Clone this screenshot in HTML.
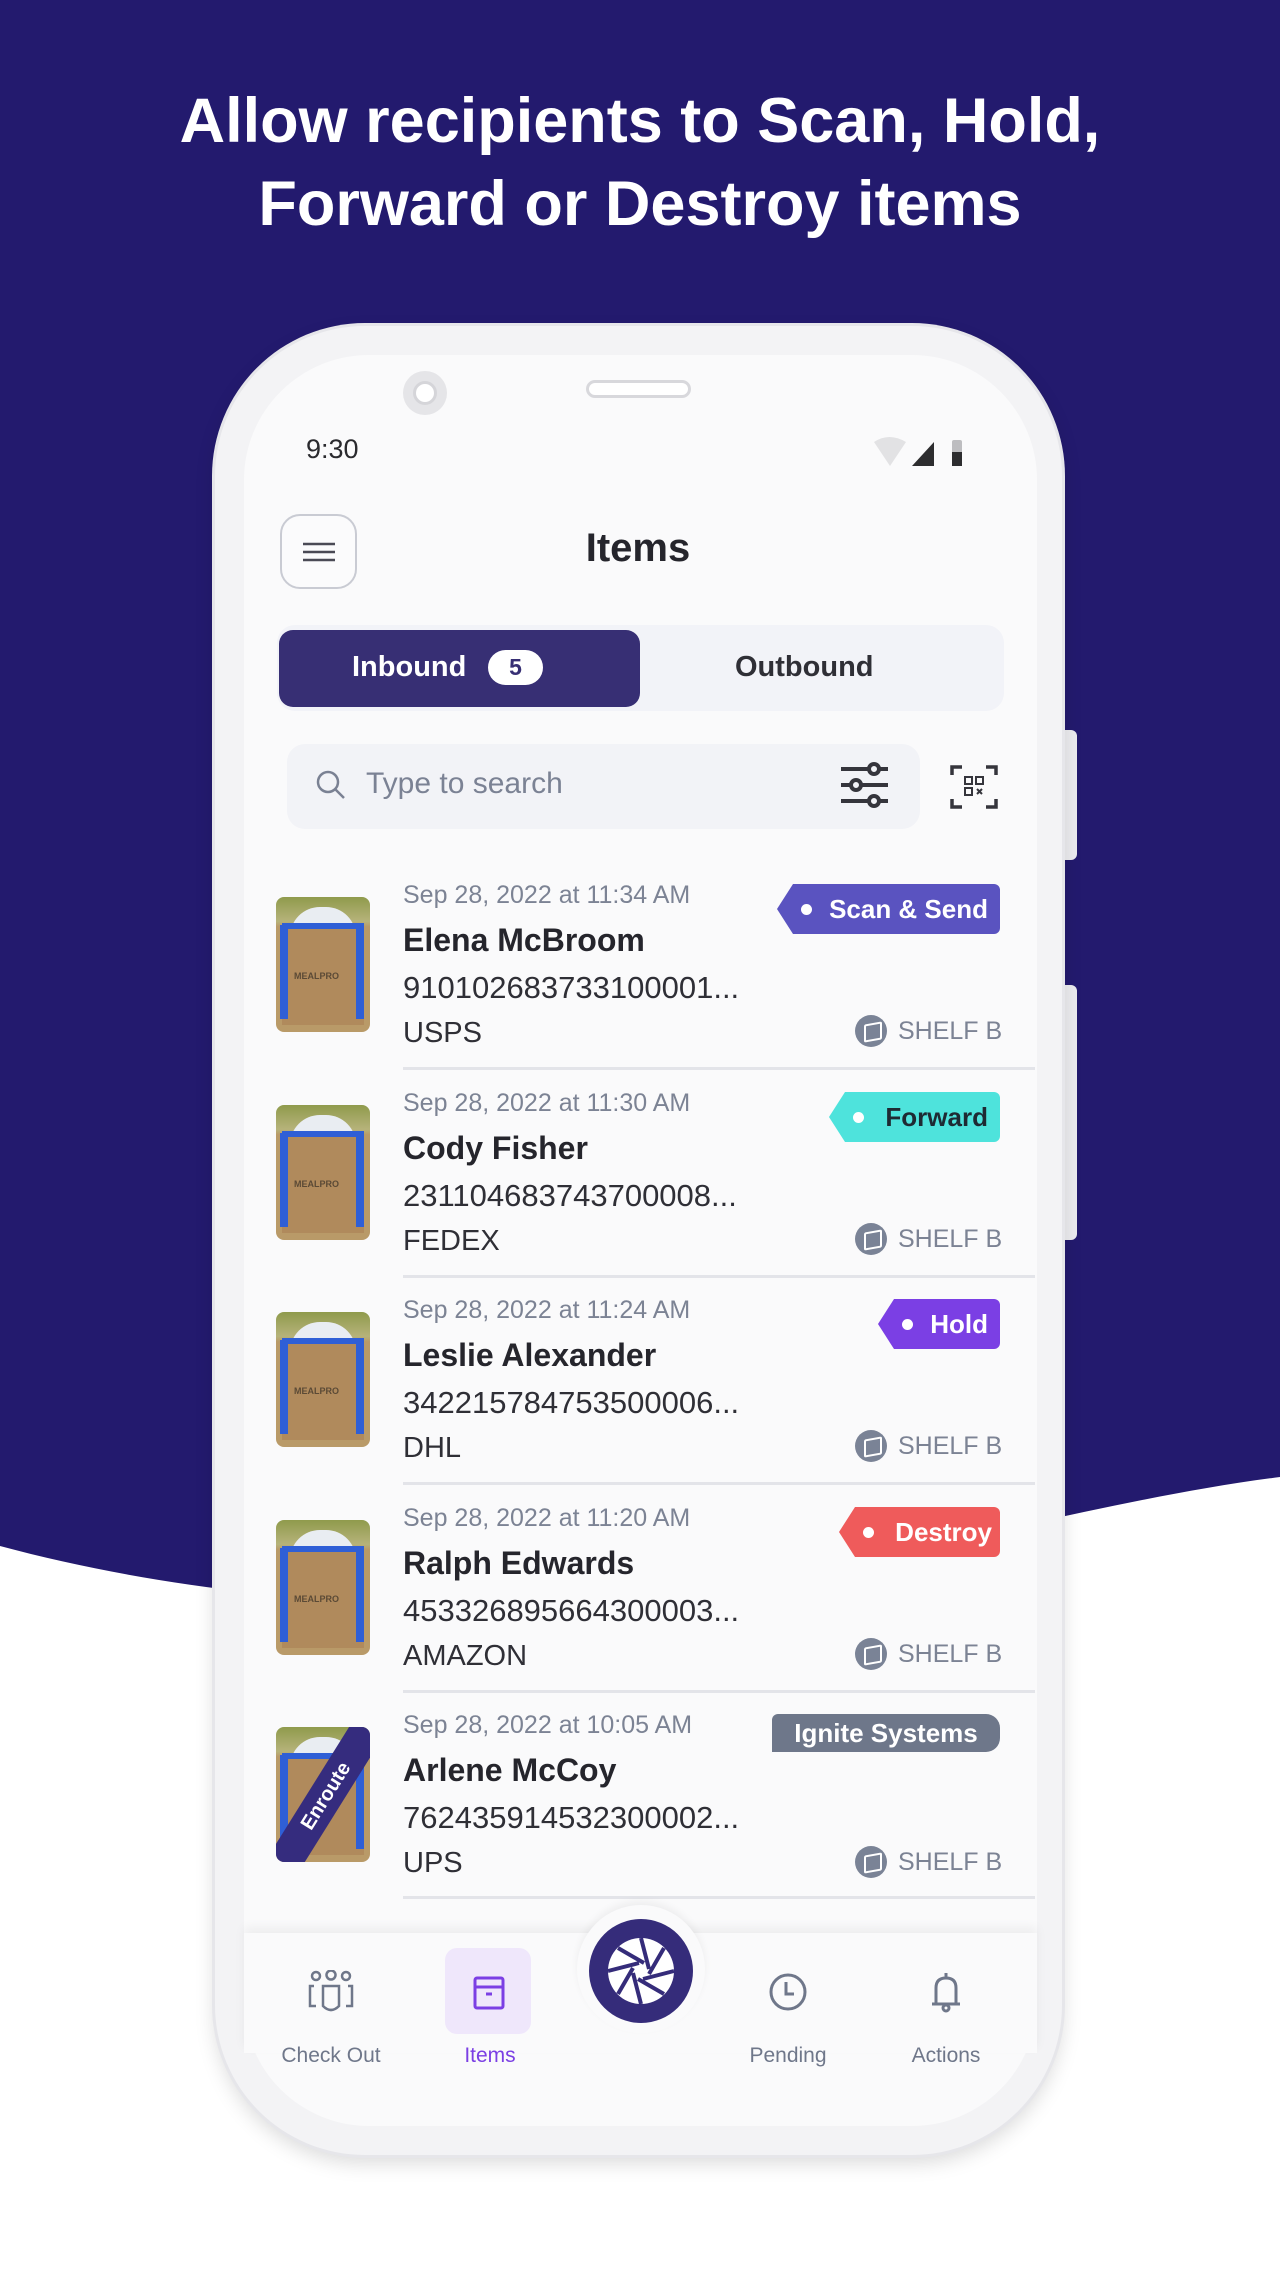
<!DOCTYPE html>
<html><head><meta charset="utf-8"><style>
*{margin:0;padding:0;box-sizing:border-box}
body{width:1280px;height:2275px;position:relative;overflow:hidden;background:#fff;font-family:"Liberation Sans",sans-serif}
.abs{position:absolute}
h1{position:absolute;left:0;width:1280px;text-align:center;color:#fff;font-size:63px;font-weight:bold;line-height:83px;top:80px}
.phone{left:215px;top:326px;width:847px;height:1829px;border-radius:150px;background:#f3f3f5;box-shadow:0 0 0 3px #e6e6ea,0 8px 20px rgba(0,0,0,.15)}
.screen{left:244px;top:355px;width:793px;height:1771px;border-radius:125px;background:#fafafb}
.item{position:absolute;left:0;width:1280px;height:208px}
.date{position:absolute;left:403px;top:20px;font-size:25px;line-height:30px;color:#7c8394}
.name{position:absolute;left:403px;top:61px;font-size:32px;line-height:38px;color:#25252c;font-weight:bold}
.num{position:absolute;left:403px;top:110px;font-size:31px;line-height:36px;color:#2f2f36}
.car{position:absolute;left:403px;top:156px;font-size:29px;line-height:34px;color:#2f2f36}
.thumb{position:absolute;left:276px;top:37px;width:94px;height:135px;border-radius:8px;overflow:hidden;background:linear-gradient(#8f9a4c 0,#b6b37a 18%,#b99a68 22%,#b99a68 100%)}
.thumb .sh{position:absolute;left:14px;top:10px;width:66px;height:30px;background:#e9edf2;border-radius:30px 30px 0 0}
.thumb .bag{position:absolute;left:6px;top:28px;width:82px;height:100px;background:#b08a5c}
.thumb .r1{position:absolute;left:4px;top:28px;width:8px;height:94px;background:#2f5fd6}
.thumb .r2{position:absolute;left:80px;top:28px;width:8px;height:94px;background:#2f5fd6}
.thumb .r3{position:absolute;left:6px;top:26px;width:82px;height:6px;background:#2f5fd6}
.thumb .t{position:absolute;left:18px;top:74px;font-size:9px;font-weight:bold;color:#5b4a36}
.tag{position:absolute;top:24px;height:50px;right:280px;color:#fff;font-size:26px;font-weight:bold;line-height:50px;padding:0 12px 0 36px;border-radius:0 6px 6px 0;white-space:nowrap}
.tag:before{content:"";position:absolute;left:-16px;top:0;border-right:16px solid var(--c);border-top:25px solid transparent;border-bottom:25px solid transparent}
.tag:after{content:"";position:absolute;left:8px;top:20px;width:11px;height:11px;border-radius:50%;background:#fff}
.shelf{position:absolute;left:855px;top:155px;width:145px;height:32px;font-size:25px;color:#7c8394;line-height:32px;white-space:nowrap}
.shelf i{position:absolute;left:0;top:0;width:32px;height:32px;border-radius:50%;background:#7a8396}
.shelf i:before{content:"";position:absolute;left:9px;top:8px;width:14px;height:14px;border:2px solid #fff;border-radius:2px;transform:skewY(-10deg)}
.shelf span{position:absolute;left:43px;top:0}
.div{position:absolute;left:403px;top:207px;width:632px;height:3px;background:#e3e4e9}
.nav{position:absolute;font-size:21px;color:#6f778a;text-align:center;width:140px;top:2044px}
</style></head><body>
<svg class="abs" style="left:0;top:0" width="1280" height="2275"><path d="M0 0H1280V1477C1100 1500 900 1560 700 1590C450 1620 200 1600 0 1546Z" fill="#231a6e"/></svg>
<h1>Allow recipients to Scan, Hold,<br>Forward or Destroy items</h1>
<div class="abs" style="left:1055px;top:730px;width:22px;height:130px;border-radius:6px;background:#ececef"></div>
<div class="abs" style="left:1055px;top:985px;width:22px;height:255px;border-radius:6px;background:#ececef"></div>
<div class="abs phone"></div>
<div class="abs screen"></div>
<div class="abs" style="left:403px;top:371px;width:44px;height:44px;border-radius:50%;background:#e5e5e8"></div>
<div class="abs" style="left:413px;top:381px;width:24px;height:24px;border-radius:50%;background:#fff;border:3px solid #d5d5d9"></div>
<div class="abs" style="left:586px;top:380px;width:105px;height:18px;border-radius:9px;border:3px solid #d8d8dc;background:#fff"></div>
<div class="abs" style="left:306px;top:434px;font-size:27px;color:#2a2a2e">9:30</div>
<svg class="abs" style="left:872px;top:434px" width="110" height="36"><path d="M2 8Q17 -2 34 8L18 32Z" fill="#e2e2e4"/><path d="M40 32L62 8V32Z" fill="#2d2d2f"/><rect x="80" y="6" width="10" height="26" rx="2" fill="#bdbdc0"/><rect x="80" y="18" width="10" height="14" fill="#2d2d2f"/></svg>
<div class="abs" style="left:280px;top:514px;width:77px;height:75px;border-radius:20px;border:2px solid #c9cbd3;background:#fbfbfc"></div>
<svg class="abs" style="left:301px;top:541px" width="36" height="22"><path d="M2 3H34M2 11H34M2 19H34" stroke="#4a4a55" stroke-width="2.5"/></svg>
<div class="abs" style="left:538px;top:526px;width:200px;text-align:center;font-size:40px;font-weight:bold;color:#25252c">Items</div>
<div class="abs" style="left:277px;top:625px;width:727px;height:86px;border-radius:18px;background:#f2f3f8"></div>
<div class="abs" style="left:279px;top:630px;width:361px;height:77px;border-radius:14px;background:#372f74"></div>
<div class="abs" style="left:352px;top:651px;font-size:29px;font-weight:bold;color:#fff">Inbound</div>
<div class="abs" style="left:488px;top:650px;width:55px;height:35px;border-radius:18px;background:#fff;color:#372f74;font-size:23px;font-weight:bold;text-align:center;line-height:35px">5</div>
<div class="abs" style="left:735px;top:651px;font-size:29px;font-weight:bold;color:#2f2f36">Outbound</div>
<div class="abs" style="left:287px;top:744px;width:633px;height:85px;border-radius:18px;background:#f2f3f7"></div>
<svg class="abs" style="left:314px;top:768px" width="36" height="36"><circle cx="14" cy="14" r="10" fill="none" stroke="#7a8193" stroke-width="2.5"/><path d="M21 21L30 30" stroke="#7a8193" stroke-width="2.5"/></svg>
<div class="abs" style="left:366px;top:767px;font-size:30px;color:#7b8294">Type to search</div>
<svg class="abs" style="left:838px;top:760px" width="54" height="50"><g stroke="#35353c" stroke-width="4" fill="#f2f3f7"><path d="M3 9H50M3 25H50M3 41H50"/><circle cx="36" cy="9" r="5"/><circle cx="18" cy="25" r="5"/><circle cx="36" cy="41" r="5"/></g></svg>
<svg class="abs" style="left:950px;top:763px" width="48" height="48"><g fill="none" stroke="#35353c" stroke-width="3.5"><path d="M2 12V4H12M36 4H46V12M46 36V44H36M12 44H2V36"/><rect x="15" y="14" width="7" height="7" stroke-width="2"/><rect x="26" y="14" width="7" height="7" stroke-width="2"/><rect x="15" y="25" width="7" height="7" stroke-width="2"/><path d="M27 26L32 31M32 26L27 31" stroke-width="2"/></g></svg>

<div class="item" style="top:860px"><div class="thumb"><div class="sh"></div><div class="bag"></div><div class="r3"></div><div class="r1"></div><div class="r2"></div><div class="t">MEALPRO</div></div>
<div class="date">Sep 28, 2022 at 11:34 AM</div><div class="name">Elena McBroom</div><div class="num">910102683733100001...</div><div class="car">USPS</div>
<div class="tag" style="--c:#5a53c0;background:#5a53c0">Scan &amp; Send</div>
<div class="shelf"><i></i><span>SHELF B</span></div><div class="div"></div></div>

<div class="item" style="top:1067.5px"><div class="thumb"><div class="sh"></div><div class="bag"></div><div class="r3"></div><div class="r1"></div><div class="r2"></div><div class="t">MEALPRO</div></div>
<div class="date">Sep 28, 2022 at 11:30 AM</div><div class="name">Cody Fisher</div><div class="num">231104683743700008...</div><div class="car">FEDEX</div>
<div class="tag" style="--c:#4ee3dc;background:#4ee3dc;color:#1e2a33;padding-left:40px">Forward</div>
<div class="shelf"><i></i><span>SHELF B</span></div><div class="div"></div></div>

<div class="item" style="top:1275px"><div class="thumb"><div class="sh"></div><div class="bag"></div><div class="r3"></div><div class="r1"></div><div class="r2"></div><div class="t">MEALPRO</div></div>
<div class="date">Sep 28, 2022 at 11:24 AM</div><div class="name">Leslie Alexander</div><div class="num">342215784753500006...</div><div class="car">DHL</div>
<div class="tag" style="--c:#7b3fe4;background:#7b3fe4">Hold</div>
<div class="shelf"><i></i><span>SHELF B</span></div><div class="div"></div></div>

<div class="item" style="top:1482.5px"><div class="thumb"><div class="sh"></div><div class="bag"></div><div class="r3"></div><div class="r1"></div><div class="r2"></div><div class="t">MEALPRO</div></div>
<div class="date">Sep 28, 2022 at 11:20 AM</div><div class="name">Ralph Edwards</div><div class="num">453326895664300003...</div><div class="car">AMAZON</div>
<div class="tag" style="--c:#ef5b5b;background:#ef5b5b;padding-left:40px;padding-right:8px">Destroy</div>
<div class="shelf"><i></i><span>SHELF B</span></div><div class="div"></div></div>

<div class="item" style="top:1690px"><div class="thumb"><div class="sh"></div><div class="bag"></div><div class="r3"></div><div class="r1"></div><div class="r2"></div>
<div style="position:absolute;left:-30px;top:52px;width:160px;height:34px;background:#352c7e;transform:rotate(-58deg);color:#fff;font-size:20px;font-weight:bold;text-align:center;line-height:34px">Enroute</div></div>
<div class="date">Sep 28, 2022 at 10:05 AM</div><div class="name">Arlene McCoy</div><div class="num">762435914532300002...</div><div class="car">UPS</div>
<div style="position:absolute;left:772px;top:24px;width:228px;height:38px;border-radius:6px 14px 14px 0;background:#6e778a;color:#fff;font-size:26px;font-weight:bold;text-align:center;line-height:38px">Ignite Systems</div>
<div class="shelf" style="top:156px"><i></i><span>SHELF B</span></div><div class="div" style="top:206px"></div></div>

<div class="abs" style="left:244px;top:1933px;width:793px;height:120px;background:#fafafb;box-shadow:0 -6px 10px rgba(0,0,0,.05)"></div>
<div class="abs" style="left:577px;top:1905px;width:128px;height:128px;border-radius:50%;background:#fafafb;box-shadow:0 -4px 8px rgba(0,0,0,.05)"></div>
<div class="abs" style="left:445px;top:1948px;width:86px;height:86px;border-radius:12px;background:#efe7fb"></div>
<svg class="abs" style="left:589px;top:1919px" width="104" height="104"><circle cx="52" cy="52" r="52" fill="#352c7a"/><circle cx="52" cy="52" r="33" fill="#fff"/><g stroke="#352c7a" stroke-width="4" fill="none"><path d="M52 19L60 50M85 52L54 60M52 85L44 54M19 52L50 44M29 29L55 44M75 29L60 55M75 75L49 60M29 75L44 49"/></g></svg>
<svg class="abs" style="left:306px;top:1970px" width="50" height="46"><g fill="none" stroke="#6f778a" stroke-width="2.5"><circle cx="10" cy="6" r="4"/><circle cx="25" cy="5" r="4.5"/><circle cx="40" cy="6" r="4"/><path d="M17 16H33V36Q25 44 17 36Z"/><path d="M8 16H4V36H10M42 16H46V36H40"/></g></svg>
<svg class="abs" style="left:472px;top:1975px" width="34" height="36"><g fill="none" stroke="#7b3fe4" stroke-width="3"><rect x="3" y="3" width="28" height="30" rx="2"/><path d="M3 12H31M14 19H20"/></g></svg>
<svg class="abs" style="left:768px;top:1972px" width="40" height="40"><g fill="none" stroke="#6f778a" stroke-width="3"><circle cx="20" cy="20" r="17"/><path d="M18 10V22H26"/></g></svg>
<svg class="abs" style="left:928px;top:1970px" width="36" height="44"><g fill="none" stroke="#6f778a" stroke-width="3"><path d="M18 3V7M8 34V18Q8 8 18 8Q28 8 28 18V34H8M4 34H32"/><circle cx="18" cy="38" r="3"/></g></svg>
<div class="nav" style="left:261px">Check Out</div>
<div class="nav" style="left:420px;color:#7b3fe4">Items</div>
<div class="nav" style="left:718px">Pending</div>
<div class="nav" style="left:876px">Actions</div>
</body></html>
